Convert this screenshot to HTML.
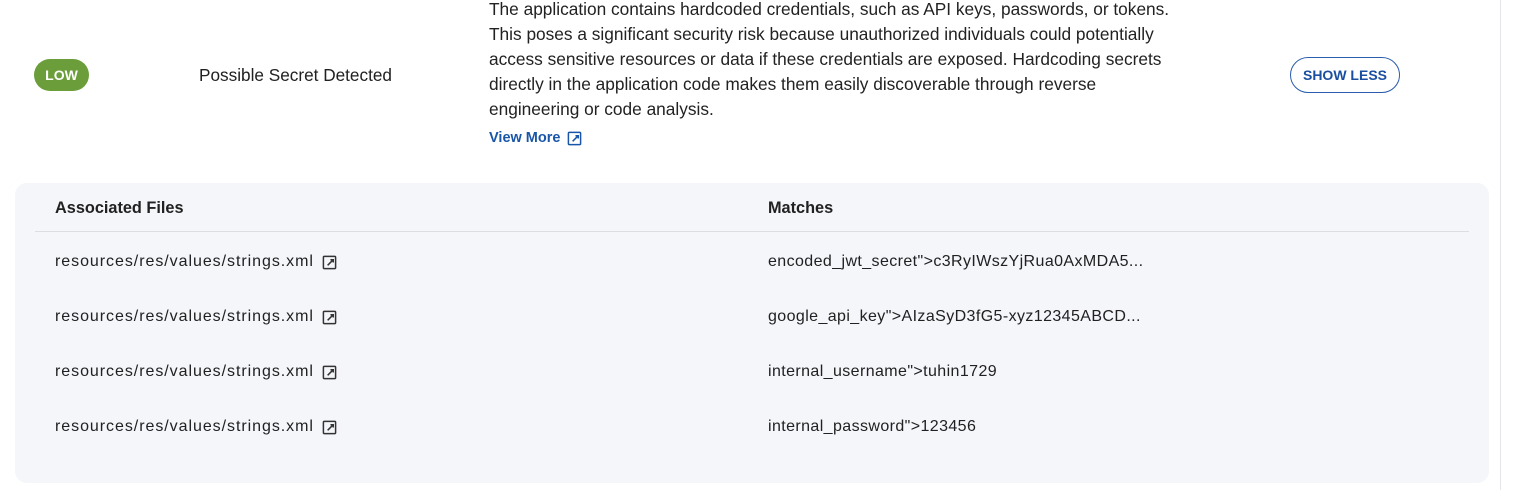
<!DOCTYPE html>
<html><head><meta charset="utf-8"><style>
*{margin:0;padding:0;box-sizing:border-box}
body{width:1521px;height:457px;overflow:hidden;background:#fff;font-family:"Liberation Sans",sans-serif;color:#212121;position:relative}
.card{position:absolute;left:0;top:-10px;width:1501px;height:500px;border-right:1px solid #e4e6ea;background:#fff}
.abs{position:absolute}
.badge{left:34px;top:59px;width:55px;height:32px;border-radius:16px;background:#6b9e3a;color:#fff;font-weight:bold;font-size:14px;line-height:32px;text-align:center}
.title{left:199px;top:65px;font-size:17.2px;line-height:20px}
.desc{left:489px;top:-3px;font-size:17.3px;line-height:25px;color:#222;white-space:nowrap}
.vm{left:489px;top:130px;font-size:14.5px;font-weight:bold;color:#1a56a8;display:flex;align-items:center;gap:7px}
.btn{left:1290px;top:57px;width:110px;height:36px;border:1px solid #2a5dad;border-radius:18px;color:#1a4fa0;font-weight:bold;font-size:14px;line-height:34px;text-align:center}
.panel{left:15px;top:183px;width:1474px;height:300px;background:#f5f6fa;border-radius:12px}
.hd{font-weight:bold;font-size:16.3px;top:199px}
.line{left:35px;top:231px;width:1434px;height:1px;background:#dcdee3}
.row{font-size:16px;line-height:20px;display:flex;align-items:center;gap:8px}
.f{letter-spacing:0.95px}
.m{letter-spacing:0.4px}
</style></head><body>
<div class="card"></div>
<div class="abs badge">LOW</div>
<div class="abs title">Possible Secret Detected</div>
<div class="abs desc">The application contains hardcoded credentials, such as API keys, passwords, or tokens.<br>This poses a significant security risk because unauthorized individuals could potentially<br>access sensitive resources or data if these credentials are exposed. Hardcoding secrets<br>directly in the application code makes them easily discoverable through reverse<br>engineering or code analysis.</div>
<div class="abs vm">View More <svg width="15" height="15" viewBox="0 0 16 16" fill="none" stroke="#1a56a8" stroke-width="1.6"><rect x="1.5" y="1.5" width="13" height="13" rx="1"/><path d="M9 5h3v3M12 5L6 11"/></svg></div>
<div class="abs btn">SHOW LESS</div>
<div class="abs panel"></div>
<div class="abs hd" style="left:55px">Associated Files</div>
<div class="abs hd" style="left:768px">Matches</div>
<div class="abs line"></div>

<div class="abs row" style="left:55px;top:252px"><span class="f">resources/res/values/strings.xml</span> <svg width="15" height="15" viewBox="0 0 16 16" fill="none" stroke="#333" stroke-width="1.6"><rect x="1.5" y="1.5" width="13" height="13" rx="1"/><path d="M9 5h3v3M12 5L6 11"/></svg></div>
<div class="abs row" style="left:55px;top:307px"><span class="f">resources/res/values/strings.xml</span> <svg width="15" height="15" viewBox="0 0 16 16" fill="none" stroke="#333" stroke-width="1.6"><rect x="1.5" y="1.5" width="13" height="13" rx="1"/><path d="M9 5h3v3M12 5L6 11"/></svg></div>
<div class="abs row" style="left:55px;top:362px"><span class="f">resources/res/values/strings.xml</span> <svg width="15" height="15" viewBox="0 0 16 16" fill="none" stroke="#333" stroke-width="1.6"><rect x="1.5" y="1.5" width="13" height="13" rx="1"/><path d="M9 5h3v3M12 5L6 11"/></svg></div>
<div class="abs row" style="left:55px;top:417px"><span class="f">resources/res/values/strings.xml</span> <svg width="15" height="15" viewBox="0 0 16 16" fill="none" stroke="#333" stroke-width="1.6"><rect x="1.5" y="1.5" width="13" height="13" rx="1"/><path d="M9 5h3v3M12 5L6 11"/></svg></div>

<div class="abs row m" style="left:768px;top:252px">encoded_jwt_secret"&gt;c3RyIWszYjRua0AxMDA5...</div>
<div class="abs row m" style="left:768px;top:307px">google_api_key"&gt;AIzaSyD3fG5-xyz12345ABCD...</div>
<div class="abs row m" style="left:768px;top:362px">internal_username"&gt;tuhin1729</div>
<div class="abs row m" style="left:768px;top:417px">internal_password"&gt;123456</div>
</body></html>
